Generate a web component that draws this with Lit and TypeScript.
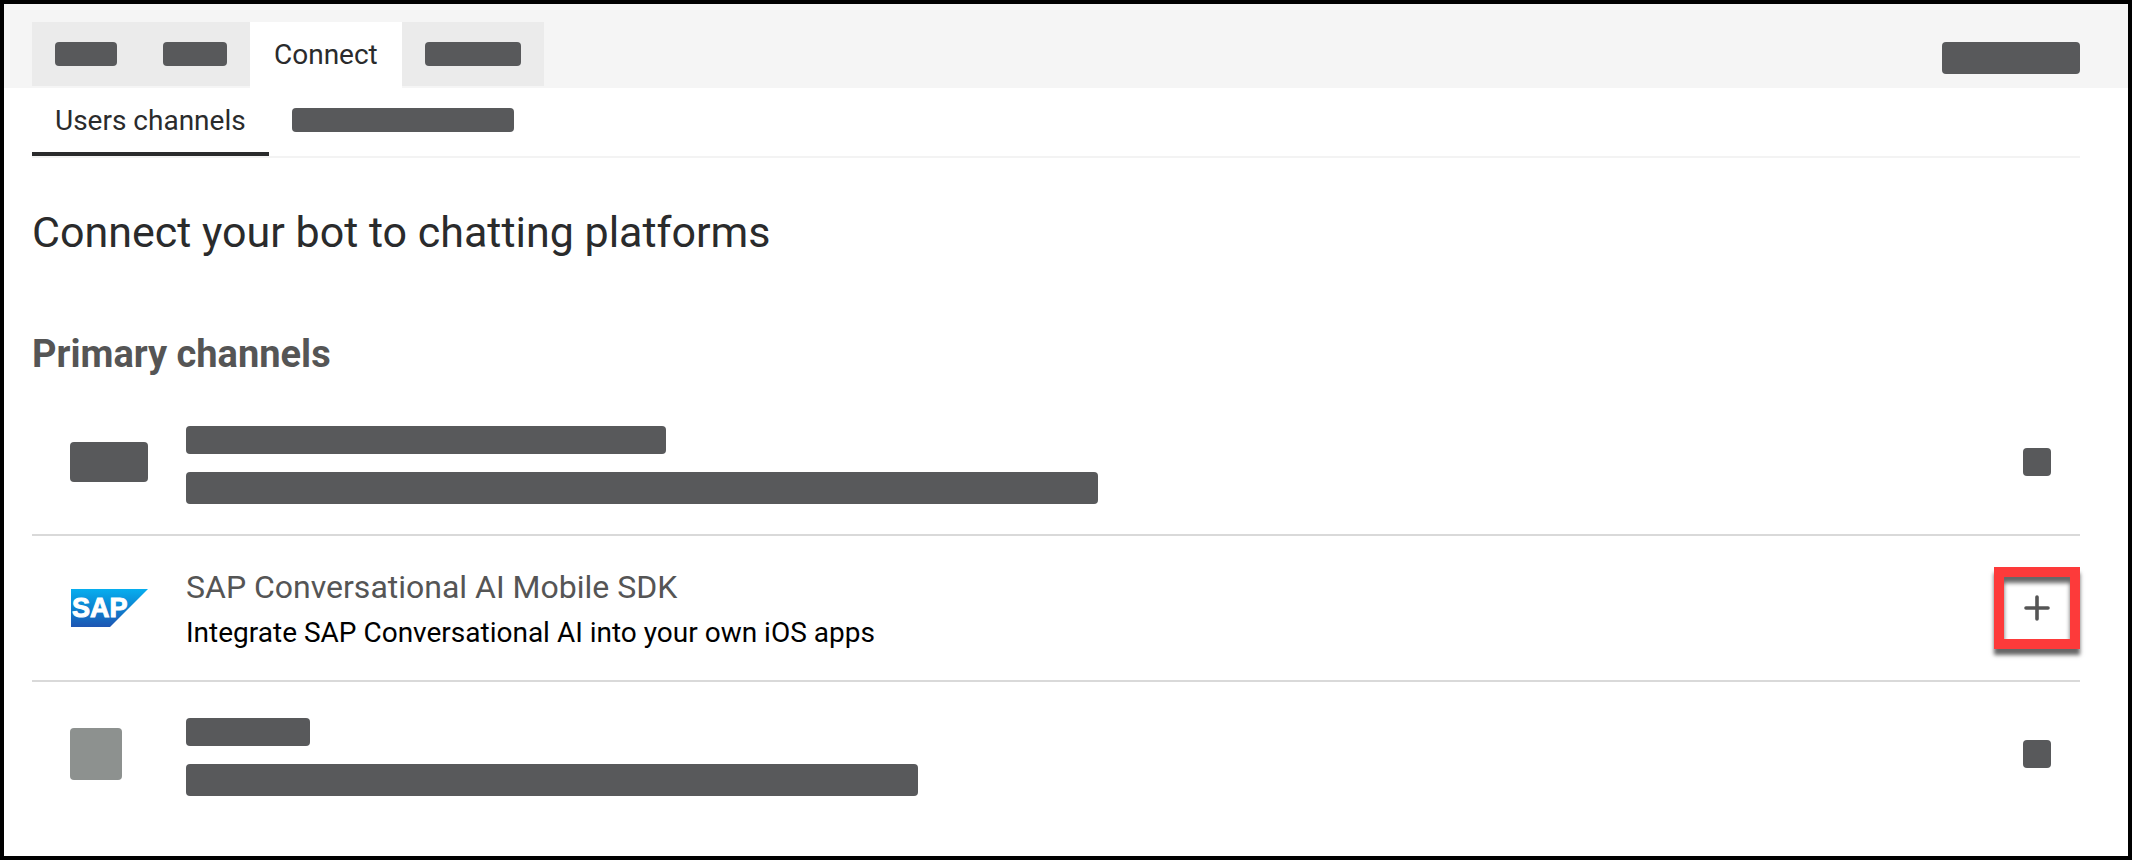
import { LitElement, html, css } from "lit";
import { customElement, property } from "lit/decorators.js";

interface Channel {
  title?: string;
  description?: string;
  titleWidth?: number;
  descriptionWidth?: number;
  icon: "block" | "tile" | "sap";
}

const CHANNELS: Channel[] = [
  { icon: "block", titleWidth: 480, descriptionWidth: 912 },
  {
    icon: "sap",
    title: "SAP Conversational AI Mobile SDK",
    description: "Integrate SAP Conversational AI into your own iOS apps",
  },
  { icon: "tile", titleWidth: 124, descriptionWidth: 732 },
];

@customElement("redacted-block")
class RedactedBlock extends LitElement {
  @property({ type: Number }) width = 28;
  @property({ type: Number }) height = 24;

  static styles = css`
    :host {
      display: block;
    }
    .block {
      max-width: 100%;
      border-radius: 4px;
      background: #58595b;
    }
  `;

  render() {
    return html`<div class="block" style="width:${this.width}px;height:${this.height}px"></div>`;
  }
}

@customElement("channel-row")
class ChannelRow extends LitElement {
  @property({ attribute: false }) channel!: Channel;

  static styles = css`
    :host {
      display: grid;
      grid-template-columns: 78px minmax(0, 1fr) 86px;
      column-gap: 38px;
      align-items: center;
      min-height: 144px;
      padding-left: 38px;
    }
    .tile {
      width: 52px;
      height: 52px;
      border-radius: 4px;
      background: #8d918f;
    }
    .logo {
      display: block;
      width: 78px;
      height: 38px;
      overflow: visible;
    }
    .logo-text {
      font: 700 27px "Liberation Sans", sans-serif;
      fill: #fff;
      stroke: #fff;
      stroke-width: 1px;
    }
    .bars {
      display: flex;
      flex-direction: column;
      gap: 18px;
      padding-top: 6px;
    }
    .text {
      padding-top: 4px;
    }
    .title,
    .description {
      margin: 0;
      line-height: 46px;
      font-weight: 400;
    }
    .title {
      font-size: 32px;
      color: #555;
    }
    .description {
      font-size: 28px;
      color: #000;
    }
    .action {
      display: flex;
      justify-content: center;
    }
    .highlight {
      flex: 1;
      display: flex;
      border: 10px solid #fd3a3a;
      box-shadow: 0 6px 4px rgba(0, 0, 0, 0.6), inset 0 6px 4px rgba(0, 0, 0, 0.6);
    }
    .add {
      flex: 1;
      display: flex;
      align-items: center;
      justify-content: center;
      height: 62px;
      padding: 0;
      border: 0;
      background: none;
      cursor: pointer;
    }
  `;

  private renderIcon() {
    switch (this.channel.icon) {
      case "block":
        return html`<redacted-block .width=${78} .height=${40}></redacted-block>`;
      case "tile":
        return html`<div class="tile"></div>`;
      default:
        return html`<svg class="logo" viewBox="0 0 78 38" role="img" aria-label="SAP">
          <defs>
            <linearGradient id="sap" x1="0" y1="0" x2="0" y2="1">
              <stop offset="0" stop-color="#06aeef" />
              <stop offset="0.5" stop-color="#0d83d0" />
              <stop offset="1" stop-color="#1e55b3" />
            </linearGradient>
          </defs>
          <path d="M1 0H78L40 38H1Z" fill="url(#sap)" />
          <text class="logo-text" x="2" y="28">SAP</text>
        </svg>`;
    }
  }

  render() {
    const { title, description, titleWidth, descriptionWidth } = this.channel;
    return html`
      ${this.renderIcon()}
      ${title
        ? html`<div class="text">
            <h3 class="title">${title}</h3>
            <p class="description">${description}</p>
          </div>`
        : html`<div class="bars">
            <redacted-block .width=${titleWidth} .height=${28}></redacted-block>
            <redacted-block .width=${descriptionWidth} .height=${32}></redacted-block>
          </div>`}
      <div class="action">
        ${title
          ? html`<div class="highlight">
              <button class="add" type="button" aria-label="Add channel">
                <svg width="26" height="26" viewBox="0 0 26 26">
                  <path
                    d="M13 2V24M2 13H24"
                    fill="none"
                    stroke="#555"
                    stroke-width="3.6"
                    stroke-linecap="round"
                  />
                </svg>
              </button>
            </div>`
          : html`<redacted-block .width=${28} .height=${28}></redacted-block>`}
      </div>
    `;
  }
}

@customElement("app-root")
class AppRoot extends LitElement {
  static styles = css`
    :host {
      display: block;
      box-sizing: border-box;
      min-height: 100vh;
      border: 4px solid #000;
      background: #fff;
      color: #2a2b2c;
      font-family: Roboto, "Liberation Sans", sans-serif;
    }
    button {
      margin: 0;
      border: 0;
      font: inherit;
      color: inherit;
      cursor: pointer;
    }
    .header {
      display: flex;
      justify-content: space-between;
      align-items: flex-start;
      padding: 18px 48px 0 28px;
      background: #f5f5f5;
    }
    .tabs {
      display: flex;
      height: 66px;
    }
    .tab {
      display: flex;
      align-items: center;
      height: 64px;
      padding: 0 23px;
      background: #ebebeb;
      font-size: 28px;
    }
    .tab.active {
      height: 66px;
      padding: 0 24px 2px;
      background: #fff;
    }
    .account {
      padding-top: 20px;
    }
    .content {
      padding: 0 48px 0 28px;
    }
    .subtabs {
      display: flex;
      height: 68px;
      border-bottom: 2px solid #f3f3f3;
    }
    .subtab {
      display: flex;
      align-items: center;
      padding: 0 23px;
      background: none;
      border-bottom: 4px solid transparent;
      font-size: 28px;
    }
    .subtab.active {
      border-bottom-color: #2a2b2c;
    }
    .heading {
      margin: 0;
      padding-top: 46px;
      font-size: 43px;
      line-height: 56px;
      font-weight: 400;
    }
    .section {
      margin: 0;
      padding: 70px 0 12px;
      font-size: 38px;
      line-height: 48px;
      font-weight: 700;
      color: #555;
    }
    .list {
      list-style: none;
      margin: 0;
      padding: 0;
    }
    .item + .item {
      border-top: 2px solid #d9d9d9;
    }
  `;

  render() {
    return html`
      <header class="header">
        <nav class="tabs" aria-label="Bot">
          <button class="tab" type="button" aria-label="Tab 1">
            <redacted-block .width=${62}></redacted-block>
          </button>
          <button class="tab" type="button" aria-label="Tab 2">
            <redacted-block .width=${64}></redacted-block>
          </button>
          <button class="tab active" type="button" aria-current="page">Connect</button>
          <button class="tab" type="button" aria-label="Tab 4">
            <redacted-block .width=${96}></redacted-block>
          </button>
        </nav>
        <div class="account">
          <redacted-block .width=${138} .height=${32}></redacted-block>
        </div>
      </header>
      <main class="content">
        <nav class="subtabs" aria-label="Channels">
          <button class="subtab active" type="button" aria-current="page">Users channels</button>
          <button class="subtab" type="button" aria-label="Other channels">
            <redacted-block .width=${222}></redacted-block>
          </button>
        </nav>
        <h1 class="heading">Connect your bot to chatting platforms</h1>
        <h2 class="section">Primary channels</h2>
        <ul class="list">
          ${CHANNELS.map(
            (channel) => html`<li class="item"><channel-row .channel=${channel}></channel-row></li>`
          )}
        </ul>
      </main>
    `;
  }
}
